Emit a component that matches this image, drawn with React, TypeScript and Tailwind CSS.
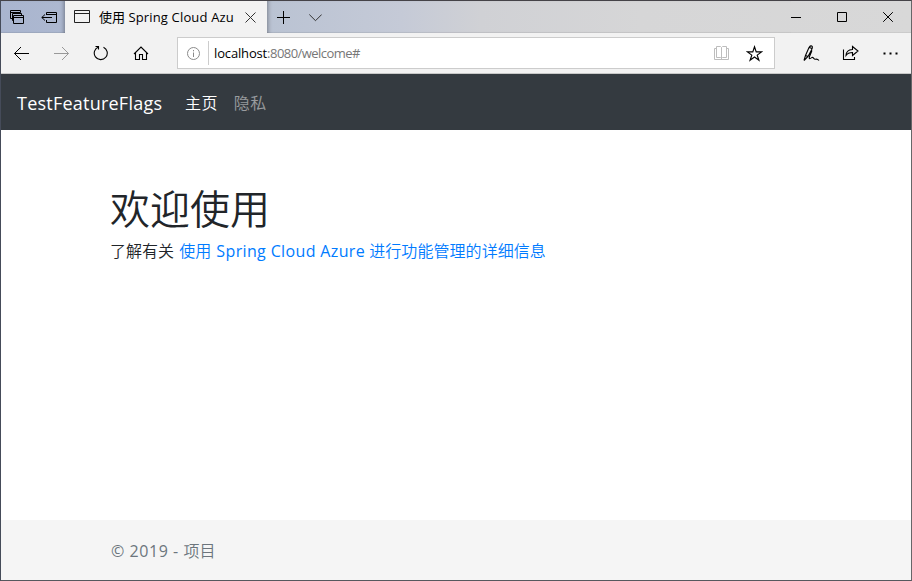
import type { ReactNode } from "react";

type IconProps = { w: number; h: number; className?: string; children: ReactNode };

function Icon({ w, h, className = "", children }: IconProps) {
  return (
    <svg
      width={w}
      height={h}
      viewBox={`0 0 ${w} ${h}`}
      fill="none"
      stroke="currentColor"
      strokeWidth="1"
      className={`block shrink-0 ${className}`}
    >
      {children}
    </svg>
  );
}

function TabStrip() {
  return (
    <div className="flex h-8 shrink-0 bg-[linear-gradient(90deg,#a9b5cf_0px,#adb8d0_64px,#bac3d3_270px,#c5cad7_400px,#d0d1d5_480px,#d6d6d7_640px,#d8d8d8_100%)] text-black shadow-[inset_0_-1px_0_rgba(0,0,0,0.06)]">
      <div className="flex w-16 shrink-0 items-start pl-[9px] pt-[9px] shadow-[inset_-4px_0_4px_-3px_rgba(0,0,0,0.35)]">
        <Icon w={15} h={15}>
          <path d="M2.500 8.500H.5V.5H10.500V2.500M.5 2.500H10.500M3.500 10.500H2.500V3.500H11.500V5.500M3.500 5.500H13.500V13.500H3.500ZM3.500 7.500H13.500" />
        </Icon>
        <Icon w={17} h={15} className="ml-4">
          <path d="M5.500 5V2.500H15.500V12.500H5.500V10M5.500 4.500H15.500M.8 7.500H11M4 4.500 .8 7.500 4 10.500" />
        </Icon>
      </div>
      <div className="flex w-[202px] shrink-0 items-center bg-[#f2f2f2] pl-[9px]">
        <Icon w={16} h={14} className="text-[#222]">
          <path d="M.5.5H15.500V12.500H.5ZM.5 3.500H15.500" />
        </Icon>
        <span className="ml-[9px] w-[136px] overflow-hidden whitespace-nowrap text-[13px] leading-5">
          使用 <span className="tracking-[0.16px]">Spring Cloud Azu</span>
        </span>
        <Icon w={11} h={11} className="ml-[10px] text-[#333]">
          <path d="m.5.5 10 10M10.500.5.5 10.500" />
        </Icon>
      </div>
      <div className="flex flex-1 items-start pl-[10px] pt-[10px] shadow-[inset_4px_0_4px_-3px_rgba(0,0,0,0.35)]">
        <Icon w={13} h={13}>
          <path d="M6.500 0V13M0 6.500H13" />
        </Icon>
        <Icon w={13} h={8} className="ml-[19px] mt-[3px] text-[#333]">
          <path d="m.3.5 6.200 6.200L12.700.5" />
        </Icon>
      </div>
      <div className="flex items-center pr-[18px]">
        <Icon w={10} h={10}>
          <path d="M0 5.500H10" />
        </Icon>
        <Icon w={10} h={10} className="ml-9">
          <path d="M.5.5H9.500V9.500H.5Z" />
        </Icon>
        <Icon w={10} h={10} className="ml-9">
          <path d="m.2.2 9.600 9.600M9.800.2.2 9.800" />
        </Icon>
      </div>
    </div>
  );
}

function Toolbar() {
  return (
    <div className="flex h-[41px] shrink-0 items-center border-b border-[#c8c8c8] bg-[#f2f2f2] pl-[12px] text-black">
      <Icon w={17} h={15}>
        <path d="M1.500 7.500H16M8 1 1.500 7.500 8 14" />
      </Icon>
      <Icon w={17} h={15} className="ml-6 text-[#999]">
        <path d="M0 7.500H14.500M8 1 14.500 7.500 8 14" />
      </Icon>
      <Icon w={16} h={17} className="ml-[22px]">
        <path d="M5.500 2A6.500 6.500 0 1 0 10.500 2.200M2.500 1.500H5.500V4.500" strokeWidth="1.1" />
      </Icon>
      <Icon w={16} h={16} className="ml-6">
        <path d="M1 9 8 2 15 9M2.500 8V14.500H6.500V9.500H9.500V14.500H13.500V8" strokeWidth="1.1" />
      </Icon>
      <div className="ml-7 flex h-8 w-[598px] shrink-0 items-center border border-[#ccc] bg-white">
        <Icon w={13} h={13} className="ml-[9px] text-[#8a8a8a]">
          <circle cx="6.500" cy="6.500" r="6" />
          <path d="M6.500 5.500V10M6.500 3V4.300" />
        </Icon>
        <div className="ml-2 h-6 w-px bg-[#ccc]" />
        <span className="ml-[5px] whitespace-nowrap text-[13px] leading-5 tracking-[-0.54px] text-[#777]">
          <span className="tracking-[-0.15px] text-black">localhost</span>:8080/welcome#
        </span>
        <div className="flex-1" />
        <Icon w={15} h={14} className="text-[#bdbdbd]">
          <path d="M2.500 11.500V.5H6.500L7.500 1.500 8.500.5H12.500V11.500H8.500L7.500 12.500 6.500 11.500ZM7.500 1.500V13M2.500 2.500H.5V13.500H14.500V2.500H12.500" />
        </Icon>
        <Icon w={17} h={17} className="ml-[17px] mr-[11px]">
          <path
            d="m8.500 1.800 1.700 5.100h5.400l-4.400 3.200 1.700 5.100-4.400-3.200-4.400 3.200 1.700-5.100-4.400-3.200h5.400Z"
            strokeWidth="1.15"
          />
        </Icon>
      </div>
      <Icon w={17} h={17} className="ml-7">
        <path
          d="M1 15.500 2.500 10.500 6 2.500Q8-.2 9.300 1.500 9.800 3 8.500 5L5 11.500 1 15.500M2.500 10.500 5 11.500M6.500 2.500 8.800 3.500M9 5.500 6.500 11.500C5.500 15 7.500 13.500 9 12.500S10.500 14.700 12.500 14.200 15 14.300 16 15.500"
          strokeWidth="1.1"
        />
      </Icon>
      <Icon w={17} h={16} className="ml-[22px]">
        <path d="M1.500 4.500V14.500H12.500V12" strokeWidth="1.1" />
        <path d="M4 10.500Q4 5 10.500 4.500V1.500L16 6 10.500 10.500V7.500Q6 7.500 4 10.500Z" strokeWidth="1.1" />
      </Icon>
      <Icon w={15} h={3} className="ml-[24px]">
        <path d="M.5 1.500H2.500M6.500 1.500H8.500M12.500 1.500H14.500" strokeWidth="2" />
      </Icon>
    </div>
  );
}

export default function App() {
  return (
    <div className="flex h-[581px] w-[912px] flex-col overflow-hidden border border-t-[#454348] border-r-[#666668] border-b-[#56585e] border-l-[#454b59] bg-white font-['Open_Sans','Noto_Sans_CJK_SC',sans-serif]">
      <TabStrip />
      <Toolbar />
      <nav className="flex h-14 shrink-0 items-center bg-[#343a40] pl-4 pt-[2px] text-white">
        <a className="w-[168px] whitespace-nowrap text-[18px] leading-[30px] tracking-[0.23px]">TestFeatureFlags</a>
        <a className="text-base font-[350] leading-6 tracking-[0.4px]">主页</a>
        <a className="ml-4 text-base font-[350] leading-6 tracking-[0.4px] text-white/50">隐私</a>
      </nav>
      <main className="flex-1 pl-[109px] pt-[55px] text-[#212529]">
        <h1 className="text-[40px] font-[350] leading-[48px]">欢迎使用</h1>
        <p className="mt-[6px] whitespace-nowrap text-base font-[350] leading-6">
          了解有关{" "}
          <a className="ml-px text-[#007bff]">
            使用 <span className="ml-px font-normal tracking-[0.36px]">Spring Cloud Azure</span>{" "}
            <span className="tracking-[0.06px]">进行功能管理的详细信息</span>
          </a>
        </p>
      </main>
      <footer className="flex h-[60px] shrink-0 items-center bg-[#f5f5f5] pl-[110px] pt-[2px] text-base text-[#6c757d]">
        <span className="whitespace-pre tracking-[0.55px]">© 2019 - </span>
        <span className="font-[350]">项目</span>
      </footer>
    </div>
  );
}
